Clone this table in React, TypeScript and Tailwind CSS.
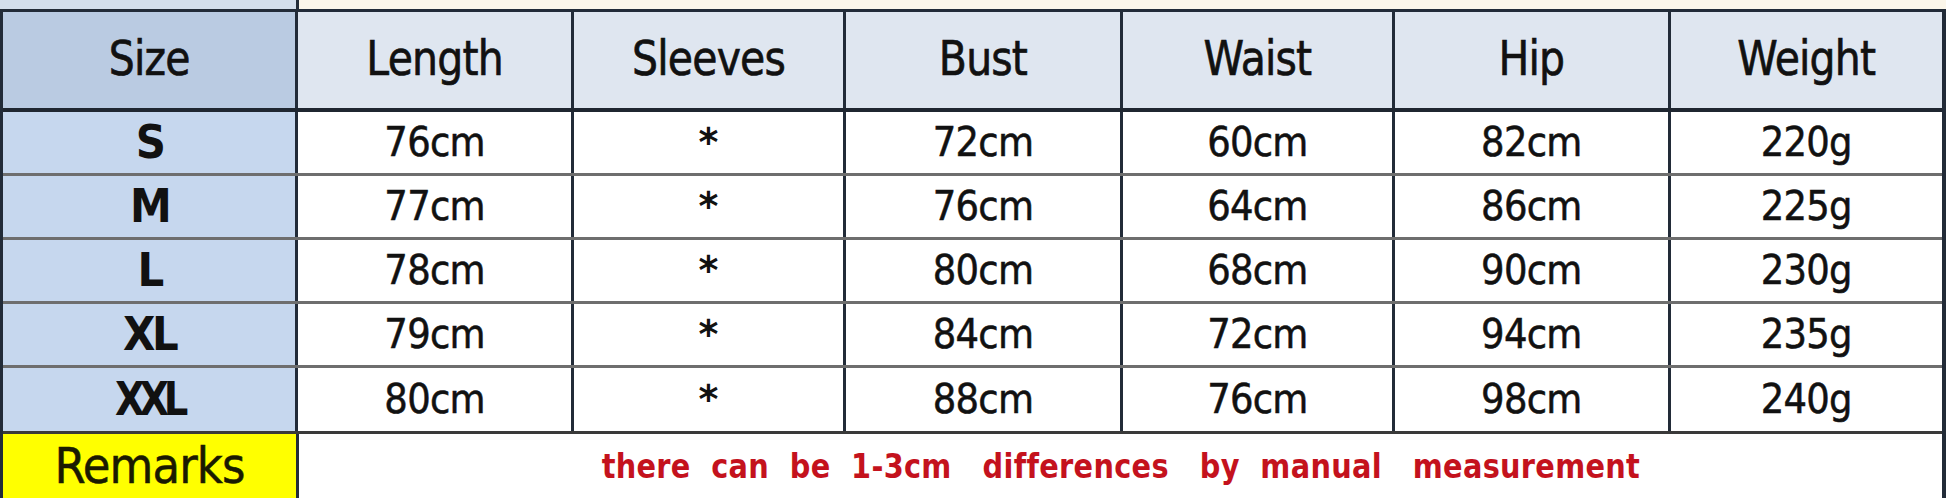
import React from "react";

const cols = ["w-[296px]", "w-[276px]", "w-[273px]", "w-[277px]", "w-[273px]", "w-[276px]", "w-[272px]"];

const headers = ["Size", "Length", "Sleeves", "Bust", "Waist", "Hip", "Weight"];

const rows = [
  ["S", "76cm", "*", "72cm", "60cm", "82cm", "220g"],
  ["M", "77cm", "*", "76cm", "64cm", "86cm", "225g"],
  ["L", "78cm", "*", "80cm", "68cm", "90cm", "230g"],
  ["XL", "79cm", "*", "84cm", "72cm", "94cm", "235g"],
  ["XXL", "80cm", "*", "88cm", "76cm", "98cm", "240g"],
];

const font = { fontFamily: "'DejaVu Sans', Verdana, sans-serif" };

export default function App() {
  return (
    <div className="w-[1946px] h-[498px] bg-white overflow-hidden flex flex-col" style={font}>
      {/* top strip (previous table edge) */}
      <div className="flex h-[9px] shrink-0">
        <div className="w-[299px] bg-[#d3deec] border-r-[3px] border-[#222b38]" />
        <div className="flex-1 bg-[#fbf6ea]" />
      </div>
      <div className="flex flex-col border-t-[3px] border-l-[3px] border-r-[4px] border-[#222b38]">
        {/* header */}
        <div className="flex h-[100px] border-b-[4px] border-[#1f2630]">
          {headers.map((h, i) => (
            <div
              key={h}
              className={`${cols[i]} ${i === 6 ? "" : "border-r-[3px] border-[#222b38]"} ${
                i === 0 ? "bg-[#bacbe2]" : "bg-[#dfe6f0]"
              } flex items-center justify-center text-[41px] text-[#111]`}
            >
              <span className="inline-block scale-y-[1.18] tracking-[-0.02em] [-webkit-text-stroke:0.6px_#111]">{h}</span>
            </div>
          ))}
        </div>
        {rows.map((r, ri) => (
          <div
            key={r[0]}
            className={`flex ${ri === 4 ? "h-[66px] border-b-[3px] border-[#3a3a3a]" : "h-[64px] border-b-[3px] border-[#6e6e6e]"}`}
          >
            {r.map((c, i) => (
              <div
                key={i}
                className={`${cols[i]} ${i === 6 ? "" : "border-r-[3px] border-[#222b38]"} ${
                  i === 0 ? "bg-[#c6d7ee]" : "bg-white"
                } flex items-center justify-center text-[#111]`}
              >
                {i === 0 ? (
                  <span
                    className={`inline-block text-[42px] font-bold scale-y-[1.08] ${
                      c === "XXL" ? "tracking-[-0.14em] scale-x-[0.92]" : "tracking-[-0.08em]"
                    }`}
                  >
                    {c}
                  </span>
                ) : i === 2 ? (
                  <span className="inline-block text-[38px] font-bold scale-y-[1.05]">{c}</span>
                ) : (
                  <span className="inline-block text-[37px] scale-y-[1.12] tracking-[-0.02em] [-webkit-text-stroke:0.5px_#111]">{c}</span>
                )}
              </div>
            ))}
          </div>
        ))}
        {/* remarks */}
        <div className="flex h-[64px]">
          <div className={`${cols[0]} border-r-[3px] border-[#222b38] bg-[#ffff00] flex items-center justify-center`}>
            <span className="inline-block text-[45px] text-[#1a1a00] scale-y-[1.1] tracking-[-0.02em] [-webkit-text-stroke:0.5px_#1a1a00]">Remarks</span>
          </div>
          <div className="flex-1 bg-white flex items-center justify-center">
            <span className="inline-block whitespace-pre text-[30px] font-bold text-[#c4121d] scale-x-[0.96] scale-y-[1.1] tracking-[0.01em]">
              {"there  can  be  1-3cm   differences   by  manual   measurement"}
            </span>
          </div>
        </div>
      </div>
    </div>
  );
}
